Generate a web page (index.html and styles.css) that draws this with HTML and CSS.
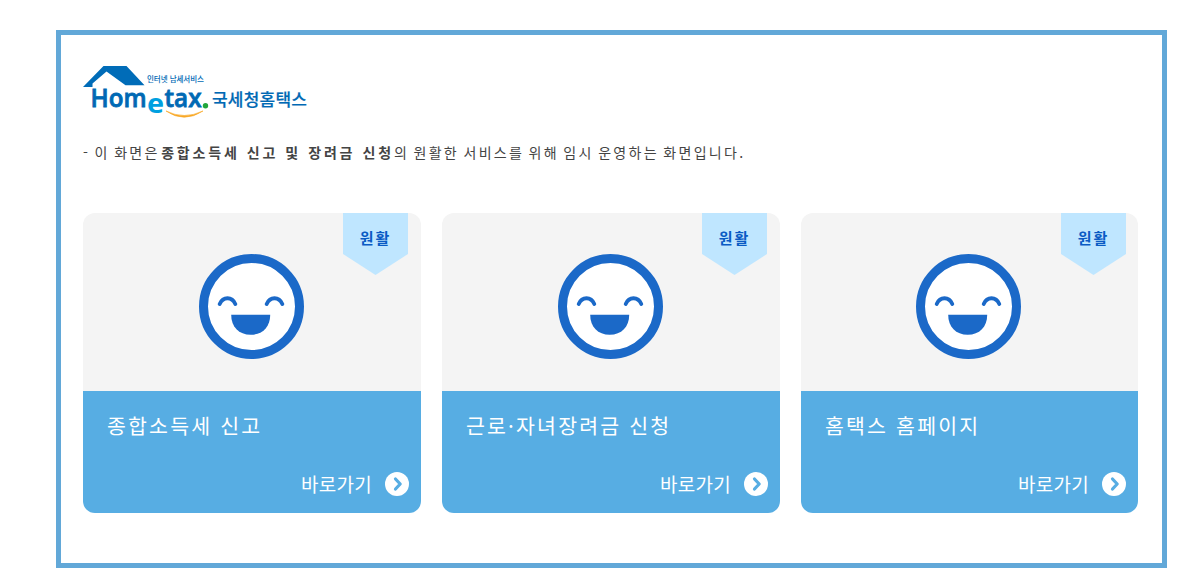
FILE: index.html
```html
<!DOCTYPE html>
<html lang="ko">
  <head>
    <meta charset="UTF-8" />
    <meta name="viewport" content="width=device-width, initial-scale=1.0" />
    <title>국세청 홈택스</title>
    <link rel="stylesheet" href="styles.css">
  </head>
  <body>
    <svg width="0" height="0" class="symbols">
      <symbol id="face" viewBox="0 0 105 105">
        <circle cx="52.5" cy="52.5" r="48" fill="#fff" stroke="#1b69c8" stroke-width="9" />
        <path d="M20.700 50C24 42.300 33 42.300 36.300 50M67.700 50C71 42.300 80 42.300 83.300 50" fill="none" stroke="#1b69c8" stroke-width="3.800" stroke-linecap="round" />
        <path d="M32.200 60.700H71.200C71.200 73 63.500 80.700 51.700 80.700S32.200 73 32.200 60.700Z" fill="#1b69c8" />
      </symbol>
      <symbol id="arrow" viewBox="0 0 24 24">
        <circle cx="12" cy="12" r="12" fill="#fff" />
        <path d="M10.500 7L15.200 12L10.500 17" fill="none" stroke="#57ade3" stroke-width="3.200" stroke-linecap="round" stroke-linejoin="round" />
      </symbol>
    </svg>

    <div class="container">
      <h1 class="logo">
        <svg width="226" height="56" viewBox="0 0 226 56">
          <path d="M0 21L20.500 0H43.500L61.500 19.300H42.500L23.500 5.500L9.500 17.500V21Z" fill="#006cb8" />
          <text x="64" y="16" class="logo-sub" textLength="57">인터넷 납세서비스</text>
          <text x="7.500" y="41" class="logo-en" textLength="56" lengthAdjust="spacingAndGlyphs">Hom</text>
          <text x="64" y="47" class="logo-e" textLength="17" lengthAdjust="spacingAndGlyphs">e</text>
          <text x="81.500" y="41" class="logo-en" textLength="37" lengthAdjust="spacingAndGlyphs">tax</text>
          <circle cx="122.500" cy="39.700" r="2.700" fill="#22a63c" />
          <path d="M83 45Q101 57.500 120 45Q101 54 83 45Z" fill="#f9a825" stroke="#f9a825" stroke-width="0.600" />
          <text x="129" y="40" class="logo-ko" textLength="95">국세청홈택스</text>
        </svg>
      </h1>
      <p class="notice">- 이 화면은 <b>종합소득세 신고 및 장려금 신청</b>의 원활한 서비스를 위해 임시 운영하는 화면입니다.</p>

      <div class="cards">
        <div class="card">
          <div class="state">
            <svg class="face"><use href="#face" /></svg>
            <span class="badge">원활</span>
          </div>
          <div class="info">
            <h2>종합소득세 신고</h2>
            <a class="go">바로가기 <svg class="arrow"><use href="#arrow" /></svg></a>
          </div>
        </div>
        <div class="card">
          <div class="state">
            <svg class="face"><use href="#face" /></svg>
            <span class="badge">원활</span>
          </div>
          <div class="info">
            <h2>근로·자녀장려금 신청</h2>
            <a class="go">바로가기 <svg class="arrow"><use href="#arrow" /></svg></a>
          </div>
        </div>
        <div class="card">
          <div class="state">
            <svg class="face"><use href="#face" /></svg>
            <span class="badge">원활</span>
          </div>
          <div class="info">
            <h2>홈택스 홈페이지</h2>
            <a class="go">바로가기 <svg class="arrow"><use href="#arrow" /></svg></a>
          </div>
        </div>
      </div>
    </div>
  </body>
</html>
```
FILE: styles.css
```css
* {
  box-sizing: border-box;
}
body {
  margin: 0;
  background: #fff;
  font-family: "Noto Sans CJK KR", sans-serif;
}
.symbols {
  display: none;
}
.container {
  width: 1111px;
  height: 538px;
  margin: 30px 0 0 56px;
  padding: 31px 24px 0 22px;
  border: 5px solid #62a8d8;
}
.logo {
  height: 56px;
  margin: 0;
}
.logo svg {
  display: block;
}
.logo text {
  fill: #0069b4;
}
.logo .logo-sub {
  font-size: 7.5px;
  font-weight: 500;
}
.logo .logo-en {
  font-family: "Open Sans", sans-serif;
  font-size: 26px;
  font-weight: 600;
  stroke: #0069b4;
  stroke-width: 0.8px;
}
.logo .logo-e {
  font-family: "Open Sans", sans-serif;
  font-size: 27px;
  font-weight: 700;
  fill: #00a0e0;
}
.logo .logo-ko {
  font-size: 17px;
  font-weight: 500;
  stroke: #0069b4;
  stroke-width: 0.2px;
}
.notice {
  height: 20px;
  margin: 20px 0 51px;
  color: #444;
  font-size: 14px;
  font-weight: 400;
  line-height: 20px;
  letter-spacing: 2.3px;
  word-spacing: -1.8px;
  white-space: nowrap;
}
.notice b {
  margin-left: -3px;
  font-weight: 700;
  letter-spacing: 2.8px;
  word-spacing: 0.5px;
}
.cards {
  display: grid;
  grid-template-columns: 338px 338px 337px;
  gap: 21px;
}
.card {
  height: 300px;
  border-radius: 12px;
  overflow: hidden;
}
.state {
  position: relative;
  display: flex;
  justify-content: center;
  height: 178px;
  padding: 41px 1px 0 0;
  background: #f4f4f4;
}
.card:last-child .state {
  padding-right: 2px;
}
.face {
  width: 105px;
  height: 105px;
}
.badge {
  position: absolute;
  top: 0;
  right: 13px;
  width: 65px;
  height: 62px;
  background: #bfe6ff;
  clip-path: polygon(0 0, 100% 0, 100% 41px, 50% 100%, 0 41px);
  color: #0a5bc4;
  font-size: 15px;
  font-weight: 700;
  line-height: 50px;
  letter-spacing: 2px;
  text-align: center;
}
.card:last-child .badge {
  right: 12px;
}
.info {
  display: flex;
  flex-direction: column;
  justify-content: space-between;
  height: 122px;
  padding: 19px 12px 17px 24px;
  background: #57ade3;
  color: #fff;
}
.info h2 {
  margin: 0;
  font-size: 20.5px;
  font-weight: 400;
  line-height: 30px;
  letter-spacing: 2.2px;
}
.go {
  display: flex;
  align-items: center;
  justify-content: flex-end;
  gap: 13px;
  font-size: 19px;
  line-height: 24px;
  letter-spacing: 0.3px;
}
.arrow {
  width: 24px;
  height: 24px;
}
```
